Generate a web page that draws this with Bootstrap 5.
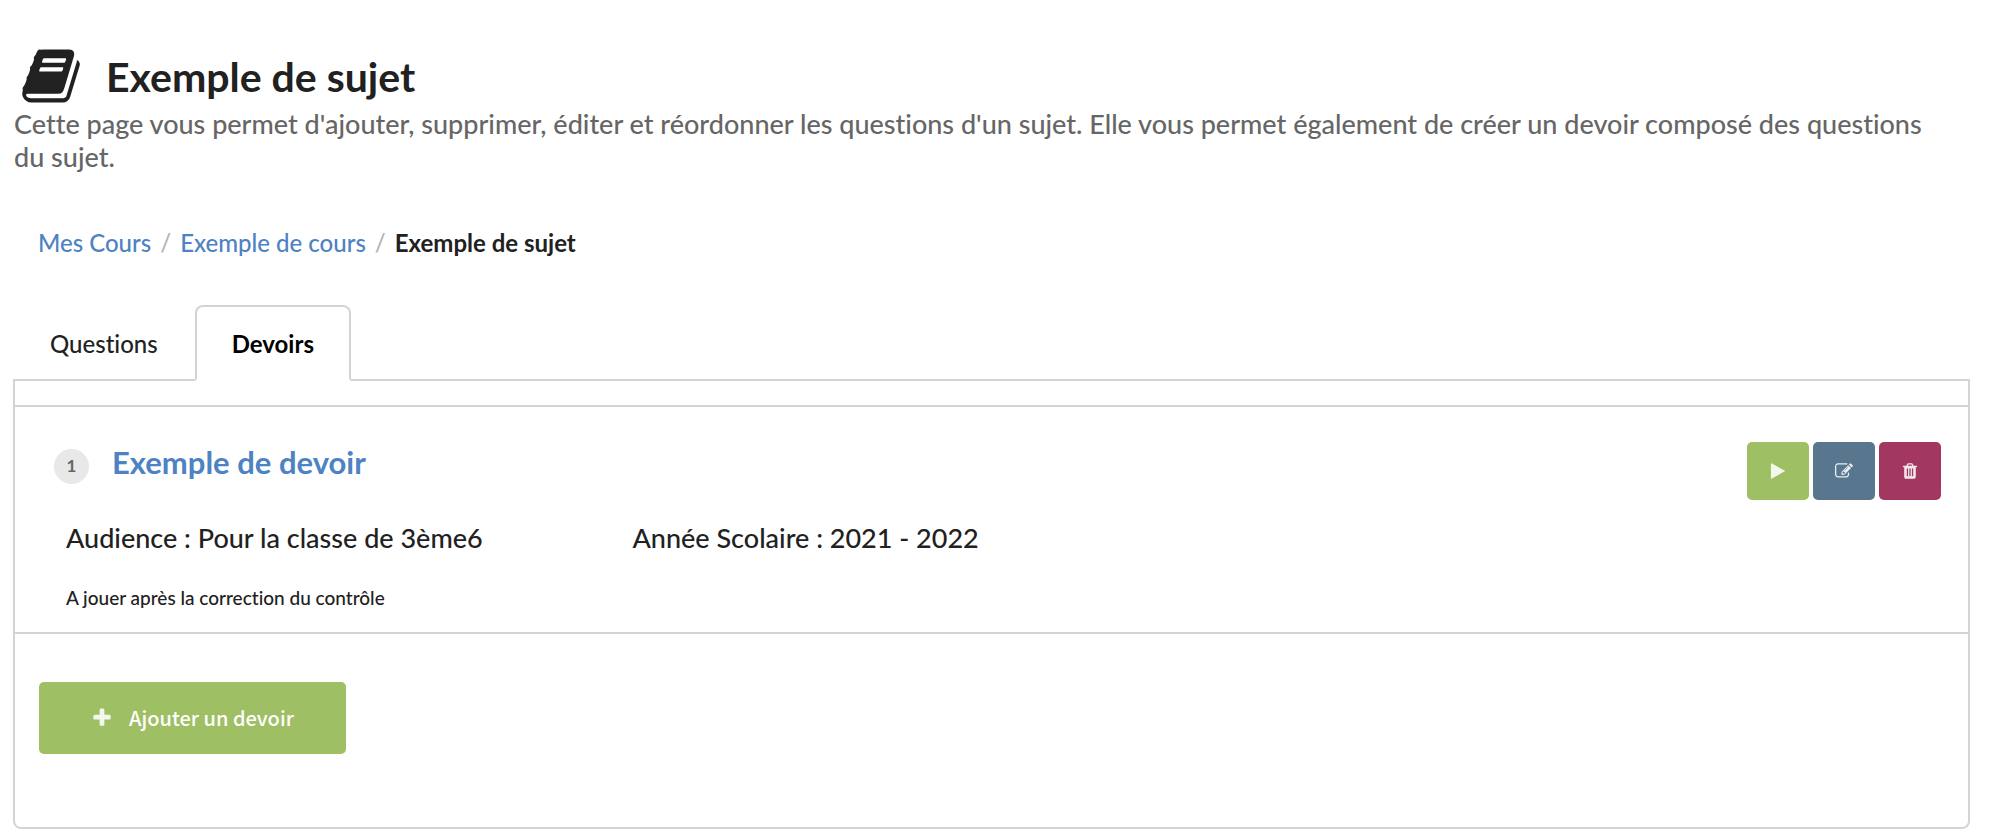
<!DOCTYPE html>
<html lang="fr">
<head>
<meta charset="utf-8">
<meta name="viewport" content="width=device-width, initial-scale=1">
<title>Exemple de sujet</title>
<link href="https://cdn.jsdelivr.net/npm/bootstrap@5.3.0/dist/css/bootstrap.min.css" rel="stylesheet">
<style>
body { font-family: Lato, "Liberation Sans", sans-serif; font-weight: 500; color: #212121; line-height: 1.2; background: #fff; }
body, button { font-variant-ligatures: none; }
a { color: #4d82c3; text-decoration: none; }
svg { fill: currentColor; display: block; flex: none; }
.page { padding: 45px 22px 8px 13px; }
.page-title { font-size: 41px; font-weight: 700; padding-left: 7px; }
.page-title span { padding: 2px 0 0 24px; }
.intro { font-size: 27px; line-height: 33px; color: #666; padding: 0 16px 0 1px; }
.trail { --bs-breadcrumb-item-padding-x: 9px; --bs-breadcrumb-divider-color: #b3b3b3; --bs-breadcrumb-item-active-color: #212121; font-size: 24px; line-height: 30px; margin: 55px 0 47px 25px; }
.nav-tabs { --bs-nav-tabs-border-width: 2px; --bs-nav-tabs-border-color: #d4d4d5; --bs-nav-tabs-border-radius: 8px; --bs-nav-tabs-link-active-border-color: #d4d4d5 #d4d4d5 #fff; --bs-nav-tabs-link-active-color: #000; border-bottom-color: #d4d4d5; }
.nav-tabs .nav-link { color: #212121; font-size: 24px; font-weight: 500; line-height: 30px; padding: 22px 35px 20px; }
.nav-tabs .nav-link.active { font-weight: 700; }
.panel { border: 2px solid #d4d4d5; border-top: 0; border-radius: 0 0 8px 8px; padding-top: 24px; }
.task { border: solid #d4d4d5; border-width: 2px 0; padding: 35px 27px 22px 39px; }
.count { width: 35px; height: 35px; border-radius: 50%; background: #e8e8e8; color: #666; font-size: 17px; font-weight: 700; margin-top: 7px; }
.task-title { font-size: 31px; line-height: 40px; font-weight: 700; margin-left: 23px; }
.facts { font-size: 27px; line-height: 34px; padding-left: 12px; margin-top: 21px; }
.audience { width: 30%; }
.note { font-size: 19px; line-height: 24px; padding-left: 12px; margin-top: 31px; }
.btn { --bs-btn-border-width: 0; --bs-btn-border-radius: 5px; --bs-btn-color: #fff; --bs-btn-hover-color: #fff; }
.tool { width: 62px; height: 58px; --bs-btn-padding-x: 0; }
.tool svg, .add svg { opacity: .88; }
.green { --bs-btn-bg: #9ebf64; --bs-btn-hover-bg: #8fb253; }
.blue { --bs-btn-bg: #58768e; --bs-btn-hover-bg: #4b677d; }
.wine { --bs-btn-bg: #a2385f; --bs-btn-hover-bg: #8e2e51; }
.actions { padding: 48px 24px 73px; }
.add { --bs-btn-padding-x: 52px; --bs-btn-padding-y: 21px; --bs-btn-font-family: "Noto Sans CJK SC", sans-serif; --bs-btn-font-size: 20px; --bs-btn-font-weight: 500; --bs-btn-line-height: 30px; gap: 16px; }
</style>
</head>
<body>
<main class="page">
  <header>
    <h1 class="page-title d-flex align-items-center mb-0">
      <svg width="62" height="62" viewBox="0 0 1792 1792" aria-hidden="true"><path d="M1703 478q40 57 18 129l-275 906q-19 64-76.5 107.5t-122.5 43.5h-923q-77 0-148.5-53.5t-99.5-131.5q-24-67-2-127 0-4 3-27t4-37q1-8-3-21.5t-3-19.5q2-11 8-21t16.5-23.5 16.5-23.5q23-38 45-91.5t30-91.5q3-10 .5-30t-.5-28q3-11 17-28t17-23q21-36 42-92t25-90q1-9-2.5-32t.5-28q4-13 22-30.5t22-22.5q19-26 42.5-84.5t27.5-96.5q1-8-3-25.5t-2-26.5q2-8 9-18t18-23 17-21q8-12 16.5-30.5t15-35 16-36 19.5-32 26.5-23.5 36-11.5 47.5 5.5l-1 3q38-9 51-9h761q74 0 114 56t18 130l-274 906q-36 119-71.5 153.5t-128.5 34.5h-869q-27 0-38 15-11 16-1 43 24 70 144 70h923q29 0 56-15.5t35-41.5l300-987q7-22 5-57 38 15 59 43zm-1064 2q-4 13 2 22.5t20 9.5h608q13 0 25.5-9.5t16.5-22.5l21-64q4-13-2-22.5t-20-9.5h-608q-13 0-25.5 9.5t-16.5 22.5zm-83 256q-4 13 2 22.5t20 9.5h608q13 0 25.5-9.5t16.5-22.5l21-64q4-13-2-22.5t-20-9.5h-608q-13 0-25.5 9.5t-16.5 22.5z"/></svg>
      <span>Exemple de sujet</span>
    </h1>
    <p class="intro mb-0">Cette page vous permet d'ajouter, supprimer, éditer et réordonner les questions d'un sujet. Elle vous permet également de créer un devoir composé des questions du sujet.</p>
  </header>

  <nav aria-label="Fil d'Ariane">
    <ol class="breadcrumb trail">
      <li class="breadcrumb-item"><a href="#">Mes Cours</a></li>
      <li class="breadcrumb-item"><a href="#">Exemple de cours</a></li>
      <li class="breadcrumb-item active" aria-current="page"><span class="fw-bold">Exemple de sujet</span></li>
    </ol>
  </nav>

  <ul class="nav nav-tabs" role="tablist">
    <li class="nav-item"><button type="button" class="nav-link" role="tab" aria-selected="false">Questions</button></li>
    <li class="nav-item"><button type="button" class="nav-link active" role="tab" aria-selected="true">Devoirs</button></li>
  </ul>

  <section class="panel">
    <article class="task">
      <div class="d-flex align-items-start">
        <span class="count d-flex align-items-center justify-content-center">1</span>
        <h2 class="task-title mb-0"><a href="#">Exemple de devoir</a></h2>
        <div class="d-flex gap-1 ms-auto">
          <button type="button" class="btn tool green d-flex align-items-center justify-content-center" aria-label="Lancer"><svg width="18" height="18" viewBox="0 0 1792 1792"><path d="M1576 927l-1328 738q-23 13-39.5 3t-16.5-36v-1472q0-26 16.5-36t39.5 3l1328 738q23 13 23 31t-23 31z"/></svg></button>
          <button type="button" class="btn tool blue d-flex align-items-center justify-content-center" aria-label="Modifier"><svg width="18" height="18" viewBox="0 0 1792 1792"><path d="M888 1184l116-116-152-152-116 116v56h96v96h56zm440-720q-16-16-33 1l-350 350q-17 17-1 33t33-1l350-350q17-17 1-33zm80 594v190q0 119-84.5 203.5t-203.5 84.5h-832q-119 0-203.5-84.5t-84.5-203.5v-832q0-119 84.5-203.5t203.5-84.5h832q63 0 117 25 15 7 18 23 3 17-9 29l-49 49q-14 14-32 8-23-6-45-6h-832q-66 0-113 47t-47 113v832q0 66 47 113t113 47h832q66 0 113-47t47-113v-126q0-13 9-22l64-64q15-15 35-7t20 29zm-96-738l288 288-672 672h-288v-288zm444 132l-92 92-288-288 92-92q28-28 68-28t68 28l152 152q28 28 28 68t-28 68z"/></svg></button>
          <button type="button" class="btn tool wine d-flex align-items-center justify-content-center" aria-label="Supprimer"><svg width="18" height="18" viewBox="0 0 1792 1792"><path d="M704 1376v-704q0-14-9-23t-23-9h-64q-14 0-23 9t-9 23v704q0 14 9 23t23 9h64q14 0 23-9t9-23zm256 0v-704q0-14-9-23t-23-9h-64q-14 0-23 9t-9 23v704q0 14 9 23t23 9h64q14 0 23-9t9-23zm256 0v-704q0-14-9-23t-23-9h-64q-14 0-23 9t-9 23v704q0 14 9 23t23 9h64q14 0 23-9t9-23zm-544-992h448l-48-117q-7-9-17-11h-317q-10 2-17 11zm928 32v64q0 14-9 23t-23 9h-96v948q0 83-47 143.5t-113 60.5h-832q-66 0-113-58.5t-47-141.5v-952h-96q-14 0-23-9t-9-23v-64q0-14 9-23t23-9h309l70-167q15-37 54-63t79-26h320q40 0 79 26t54 63l70 167h309q14 0 23 9t9 23z"/></svg></button>
        </div>
      </div>
      <div class="d-flex flex-wrap gap-1 facts">
        <div class="audience">Audience : Pour la classe de 3ème6</div>
        <div>Année Scolaire : 2021 - 2022</div>
      </div>
      <p class="note mb-0">A jouer après la correction du contrôle</p>
    </article>
    <div class="actions">
      <button type="button" class="btn add green d-inline-flex align-items-center"><svg width="22" height="22" viewBox="0 0 1792 1792" aria-hidden="true"><path d="M1600 736v192q0 40-28 68t-68 28h-416v416q0 40-28 68t-68 28h-192q-40 0-68-28t-28-68v-416h-416q-40 0-68-28t-28-68v-192q0-40 28-68t68-28h416v-416q0-40 28-68t68-28h192q40 0 68 28t28 68v416h416q40 0 68 28t28 68z"/></svg>Ajouter un devoir</button>
    </div>
  </section>
</main>
<script src="https://cdn.jsdelivr.net/npm/bootstrap@5.3.0/dist/js/bootstrap.bundle.min.js"></script>
</body>
</html>
